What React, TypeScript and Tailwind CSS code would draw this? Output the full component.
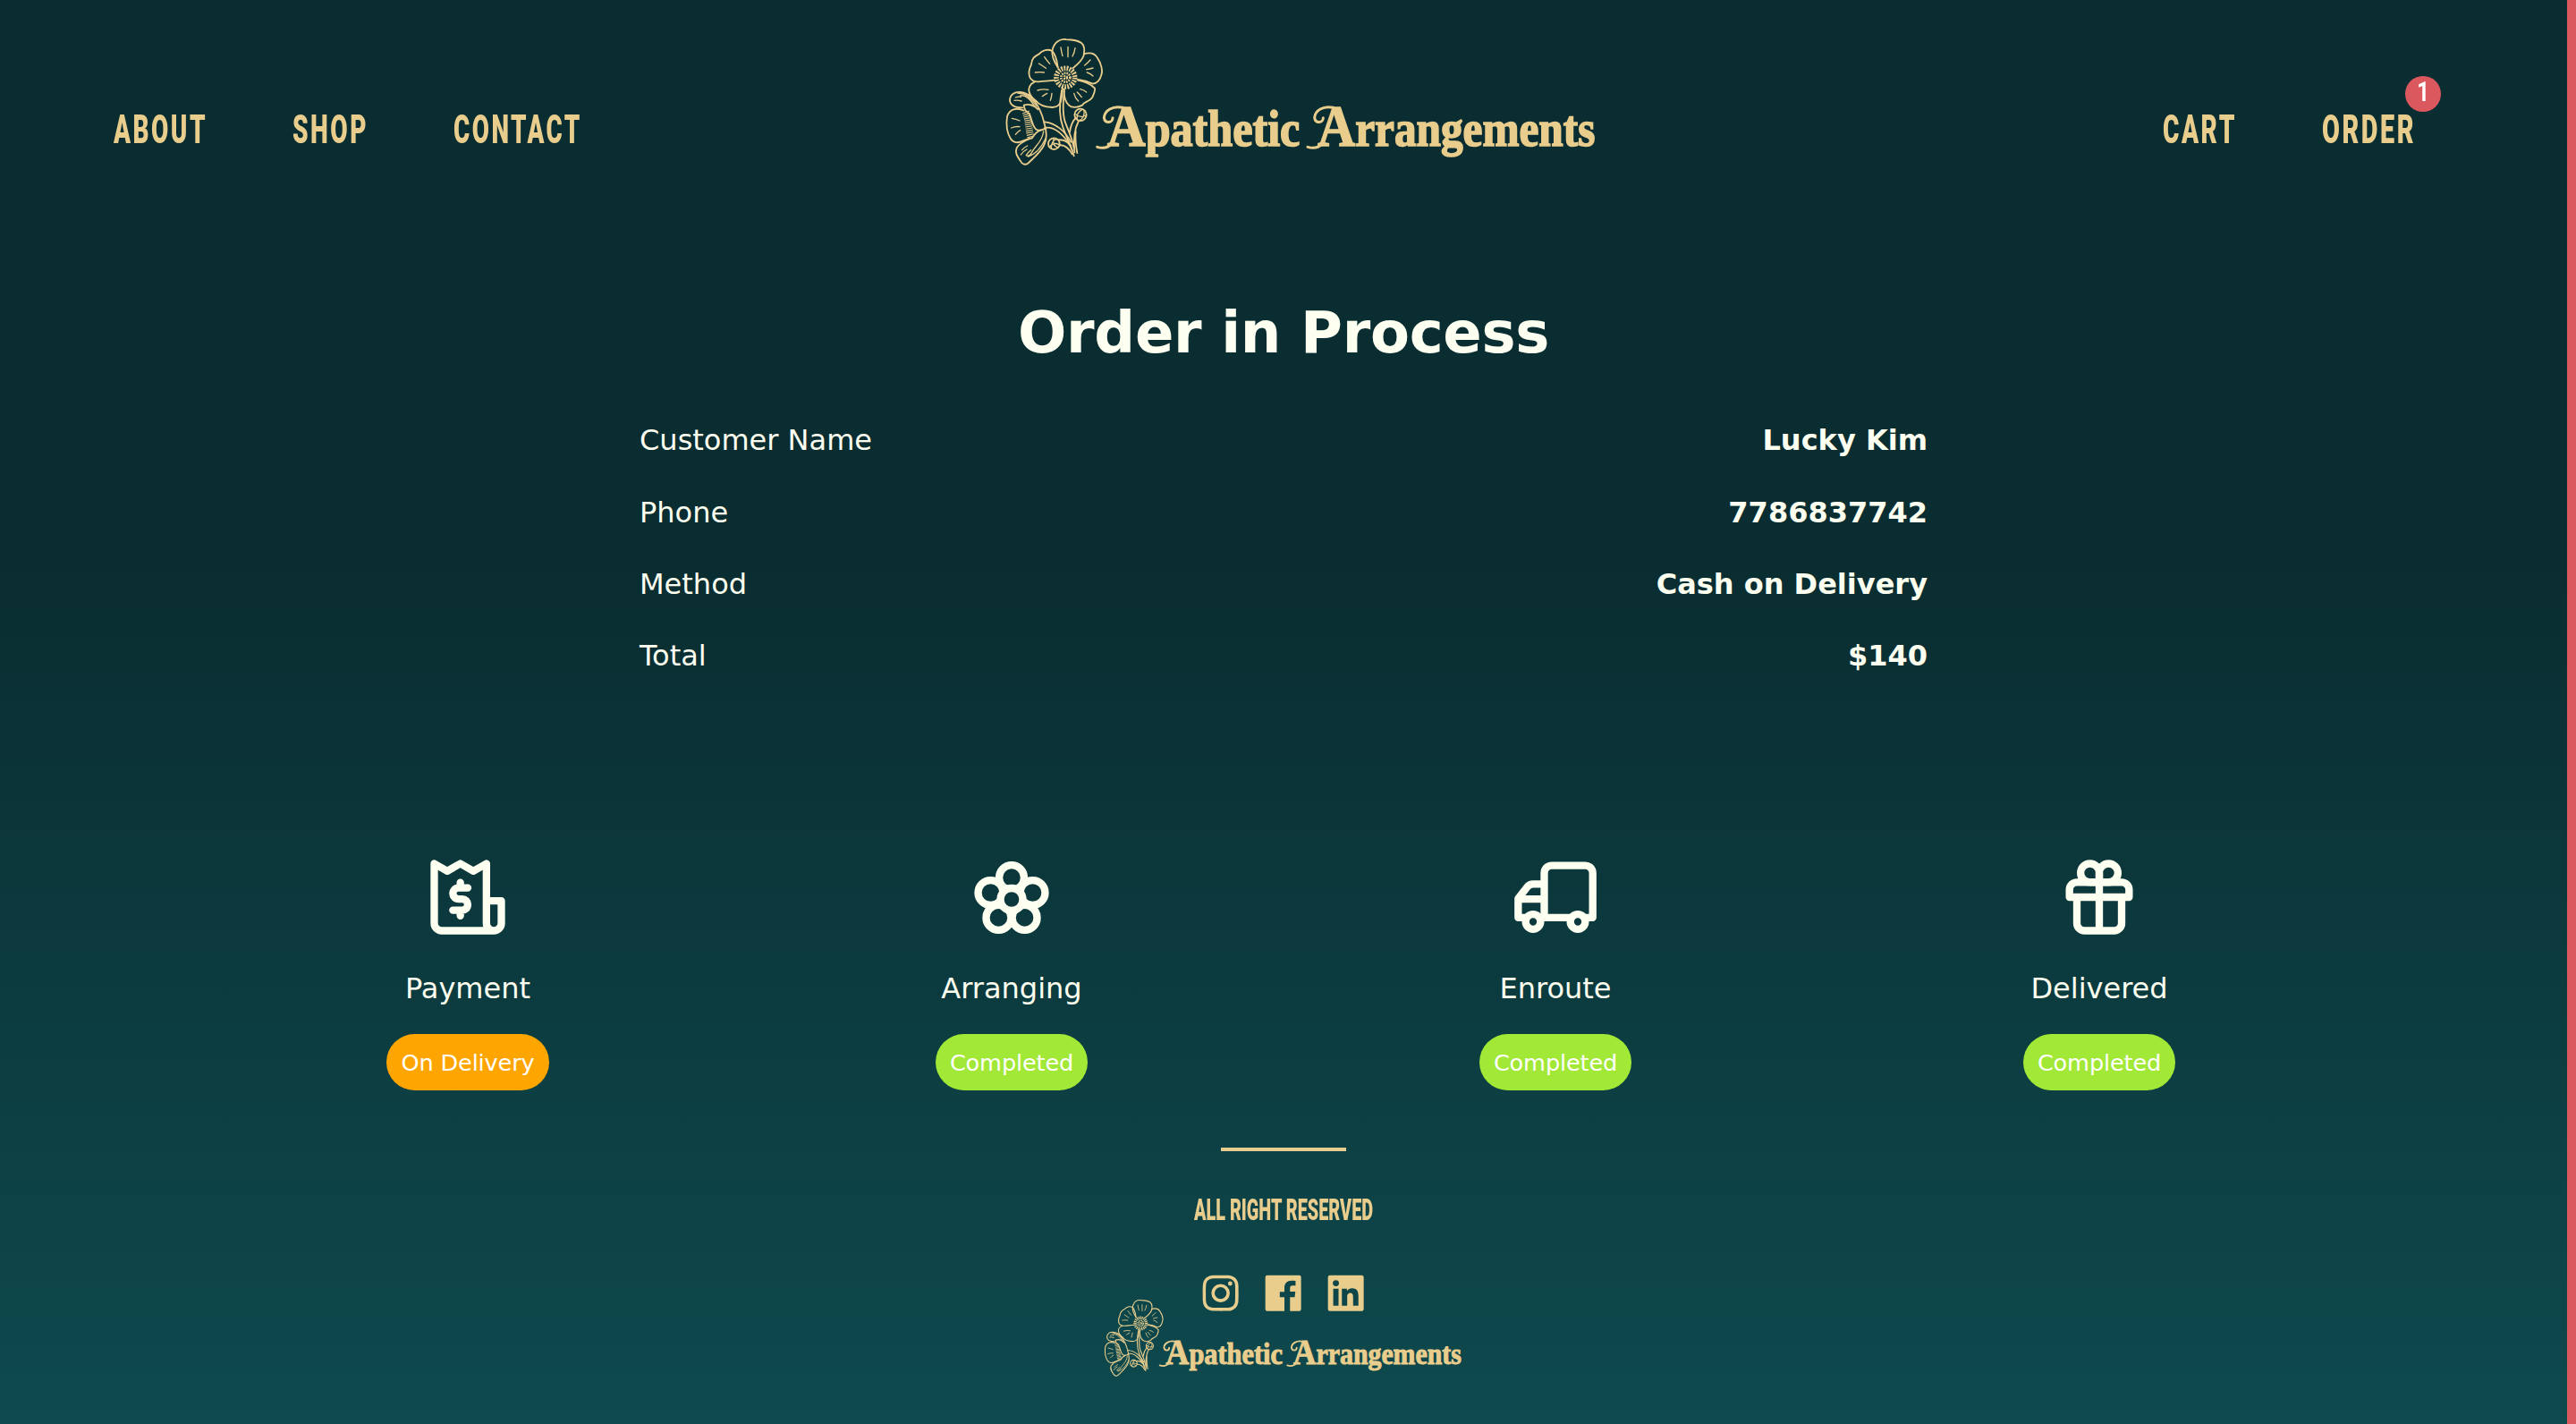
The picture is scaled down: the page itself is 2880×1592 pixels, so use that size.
import { useLayoutEffect, useRef, useState, type ReactNode } from "react";
import { BiLogoFacebookSquare, BiLogoInstagram, BiLogoLinkedinSquare } from "react-icons/bi";

/** Condensed display lettering: the text is squeezed to the given width. */
function Condensed({ text, width, className }: { text: string; width: number; className: string }) {
  const ref = useRef<HTMLSpanElement>(null);
  const [scale, setScale] = useState(0.6);
  useLayoutEffect(() => {
    if (ref.current) setScale(width / ref.current.offsetWidth);
  }, [width]);
  return (
    <span className="block whitespace-nowrap font-['Roboto',sans-serif] font-black" style={{ width }}>
      <span ref={ref} className={`inline-block origin-left ${className}`} style={{ transform: `scaleX(${scale})` }}>
        {text}
      </span>
    </span>
  );
}

function Logo({ className }: { className: string }) {
  return (
    <svg viewBox="45 38 1980 426" className={`overflow-visible ${className}`} fill="none" stroke="#e9cd8d" strokeWidth="5.5" strokeLinecap="round">
      <g>
        <path d="M218 135C205 115 196 95 200 75C207 50 225 38 245 41C265 42 285 44 297 53C308 62 308 80 305 95C298 115 280 128 268 138" />
        <path d="M305 90C325 84 342 88 350 102C362 120 370 145 364 160C360 178 348 190 335 190C318 182 300 178 285 176" />
        <path d="M218 135C215 110 208 88 198 80C185 72 165 78 155 90C140 98 130 105 129 125C122 140 118 155 124 168C130 180 140 184 155 183C175 181 195 180 207 178" />
        <path d="M140 184C125 190 118 205 122 218C126 232 135 240 145 247C155 262 180 268 200 269C220 268 228 258 230 240C233 225 232 212 234 205" />
        <path d="M285 178C305 182 330 192 342 205C344 215 338 225 334 235C325 250 305 250 300 262C285 270 265 272 255 262C242 250 238 225 238 208" />
      </g>
      <g strokeWidth="4">
        <path d="M228 68Q230 84 234 97M252 66V100M276 70Q274 86 267 98M173 100Q181 112 191 123M154 122Q168 130 178 138M142 152Q158 150 172 152M327 110Q318 120 308 128M336 137Q326 140 314 142M316 152Q328 156 336 164M150 212Q168 206 186 210M166 232Q174 226 182 222M198 222Q197 236 193 246M272 222Q276 238 287 248M283 218Q291 226 298 235M293 208Q304 210 314 218" />
      </g>
      <circle cx="244" cy="169" r="31" strokeWidth="17" strokeDasharray="5.5 3.8" strokeLinecap="butt" />
      <circle cx="244" cy="169" r="15" strokeWidth="8" strokeDasharray="5 3" strokeLinecap="butt" />
      <circle cx="244" cy="169" r="5" strokeWidth="7" strokeDasharray="5 3" strokeLinecap="butt" />
      <g>
        <path d="M231 212C222 260 222 300 235 335C245 365 262 395 272 432" />
        <path d="M240 212C234 260 234 300 245 325C256 352 268 380 272 405" />
        <path d="M258 352C260 335 266 318 278 304M274 420C270 380 272 345 288 314M283 422C278 395 276 370 278 350" />
        <circle cx="294" cy="294" r="20" />
        <path d="M283 310C280 296 286 284 300 276M290 313C302 308 308 298 306 280M278 292C288 302 300 302 312 296" strokeWidth="4" />
        <circle cx="205" cy="391" r="19" />
        <path d="M218 377C206 374 196 384 196 408M222 394C208 386 198 392 190 402M204 373C200 390 206 400 218 404" strokeWidth="4" />
        <path d="M221 378C245 376 258 388 266 412M224 396C244 394 256 408 266 426" />
        <path d="M175 318C210 322 242 348 262 385M174 338C205 330 236 360 262 398" />
      </g>
      <g>
        <path d="M100 270C78 270 58 264 57 245C58 225 75 216 92 218C112 220 125 230 135 242C152 262 165 290 172 320" />
        <path d="M92 230C108 226 124 240 138 262M84 222C108 220 124 232 146 264M120 225C132 242 142 246 146 250" strokeWidth="4" />
        <path d="M104 262C120 256 140 262 152 276M104 262C106 280 114 285 122 290C132 312 132 330 144 342C152 350 164 346 176 340" />
        <path d="M104 280C80 268 55 275 48 300C44 325 48 355 60 375C68 388 85 390 100 382C112 376 122 374 132 372C138 362 146 350 160 346" />
        <path d="M172 320C180 345 182 375 172 395C160 420 140 435 120 455C110 465 98 460 92 448C80 430 74 420 80 405C88 390 105 382 124 374" />
        <path d="M170 350C166 385 142 398 132 418C126 430 118 434 112 430C116 422 122 418 128 412M178 372C160 410 140 428 118 434" strokeWidth="4" />
        <path d="M72 246Q84 244 96 248M76 236Q86 232 94 234M64 306Q78 308 90 314M62 338Q76 332 90 334M76 360Q84 350 92 346M94 428Q102 416 114 410M98 412Q106 402 116 398" strokeWidth="4" />
      </g>
      <path d="M110 284C120 310 120 340 128 372" strokeWidth="24" strokeDasharray="3.5 3.5" strokeLinecap="butt" />
      <g strokeWidth="9">
        <path d="M436 270C402 262 374 280 373 304C376 324 402 322 402 304M402 388C388 404 368 408 350 402" />
        <path d="M436 270C402 262 374 280 373 304C376 324 402 322 402 304M402 388C388 404 368 408 350 402" transform="translate(706)" />
      </g>
      <g fill="#e9cd8d" strokeWidth="5" fontFamily="'Liberation Serif', serif" fontWeight="700" fontSize="168">
        <text x="384" y="397" textLength="646" lengthAdjust="spacingAndGlyphs">
          <tspan fontSize="198">A</tspan>pathetic
        </text>
        <text x="1090" y="397" textLength="930" lengthAdjust="spacingAndGlyphs">
          <tspan fontSize="198">A</tspan>rrangements
        </text>
      </g>
    </svg>
  );
}

function StepIcon({ children }: { children: ReactNode }) {
  return (
    <svg viewBox="0 0 24 24" className="size-[100px]" fill="none" stroke="#fdfff0" strokeWidth="2" strokeLinecap="round" strokeLinejoin="round">
      {children}
    </svg>
  );
}

const steps = [
  {
    label: "Payment",
    status: "On Delivery",
    pill: "bg-[#ffa500]",
    icon: (
      <StepIcon>
        <path d="M19 21H5a2 2 0 0 1-2-2V3l3.5 2L10 3l3.5 2L17 3v16a2 2 0 0 0 4 0v-6h-4M21 19a2 2 0 0 1-2 2" />
        <path d="M17 19a2 2 0 0 0 2 2h-2z" fill="#fdfff0" stroke="none" />
        <path d="M12 9.5H9.5a1.5 1.5 0 0 0 0 3h1a1.5 1.5 0 0 1 0 3H8M10 8.1v1.4M10 15.5V17" />
      </StepIcon>
    ),
  },
  {
    label: "Arranging",
    status: "Completed",
    pill: "bg-[#a2e836]",
    icon: (
      <StepIcon>
        <mask id="flower-centre" maskUnits="userSpaceOnUse" x="0" y="0" width="24" height="24">
          <rect width="24" height="24" fill="white" stroke="none" />
          <circle cx="12" cy="12.6" r="2.5" fill="black" stroke="none" />
        </mask>
        <g mask="url(#flower-centre)">
          <circle cx="12" cy="6.75" r="3.35" />
          <circle cx="6.35" cy="10.8" r="3.35" />
          <circle cx="17.65" cy="10.8" r="3.35" />
          <circle cx="8.5" cy="17.5" r="3.35" />
          <circle cx="15.5" cy="17.5" r="3.35" />
        </g>
        <circle cx="12" cy="12.6" r="3" />
      </StepIcon>
    ),
  },
  {
    label: "Enroute",
    status: "Completed",
    pill: "bg-[#a2e836]",
    icon: (
      <StepIcon>
        <path d="M9 17.5v-12a2 2 0 0 1 2-2h9a2 2 0 0 1 2 2v12h-2M16 17.5H8M4 17.5H2v-5.1l2.4-3.1A2 2 0 0 1 6 8.5h3M2.2 12.5H9" />
        <circle cx="6" cy="18.6" r="2" />
        <circle cx="18" cy="18.6" r="2" />
      </StepIcon>
    ),
  },
  {
    label: "Delivered",
    status: "Completed",
    pill: "bg-[#a2e836]",
    icon: (
      <StepIcon>
        <path d="M4 12v-2a2 2 0 0 1 2-2h12a2 2 0 0 1 2 2v2zM6 12v7a2 2 0 0 0 2 2h8a2 2 0 0 0 2-2v-7M12 5.5V21" />
        <path d="M12 8H9.5A2.5 2.5 0 1 1 12 5.5zM12 8h2.5A2.5 2.5 0 1 0 12 5.5z" />
      </StepIcon>
    ),
  },
];

const details = [
  ["Customer Name", "Lucky Kim"],
  ["Phone", "7786837742"],
  ["Method", "Cash on Delivery"],
  ["Total", "$140"],
];

const navText = "text-[45px] leading-[54px] tracking-[4px]";

export default function App() {
  return (
    <div className="flex h-[1592px] w-[2880px] overflow-hidden bg-[linear-gradient(to_bottom,#0a2d31_0%,#0a2d31_40%,#0e4a4e_100%)] font-['DejaVu_Sans',Verdana,sans-serif] text-[#fdfff0]">
      <div className="flex w-[2870px] flex-col items-center">
        <header className="flex h-[227px] w-full items-start pl-[127px] text-[#e9cd8d]">
          <nav className="flex w-[998px] gap-[95px] pt-[118px]">
            <Condensed text="ABOUT" width={105} className={navText} />
            <Condensed text="SHOP" width={85} className={navText} />
            <Condensed text="CONTACT" width={144} className={navText} />
          </nav>
          <Logo className="mt-[43px] h-[142px] w-[660px] shrink-0" />
          <nav className="ml-[633px] flex gap-[95px] pt-[118px]">
            <Condensed text="CART" width={83} className={navText} />
            <div className="relative">
              <Condensed text="ORDER" width={105} className={navText} />
              <span className="absolute -top-[33px] left-[93px] flex size-10 items-start justify-center rounded-full bg-[#dc585f] font-['Roboto',sans-serif] text-[32px] leading-[35px] font-bold text-white">
                <span className="inline-block scale-x-75">1</span>
              </span>
            </div>
          </nav>
        </header>

        <main className="flex w-full flex-col items-center">
          <h1 className="mt-[106px] text-[64px] leading-[78px] font-bold tracking-[-0.3px]">Order in Process</h1>
          <dl className="mt-[41px] flex w-[1440px] flex-col text-[32px]">
            {details.map(([name, value]) => (
              <div key={name} className="flex h-[80.4px] items-center justify-between">
                <dt>{name}</dt>
                <dd className="font-bold">{value}</dd>
              </div>
            ))}
          </dl>
          <ul className="mt-[179.4px] grid w-[2432px] grid-cols-4">
            {steps.map((step) => (
              <li key={step.label} className="flex flex-col items-center">
                {step.icon}
                <p className="mt-[33px] text-[32px] leading-[39px]">{step.label}</p>
                <span className={`mt-[31px] flex h-[63px] items-center rounded-full px-4 pt-0.5 text-[25.6px] tracking-[-0.15px] text-white ${step.pill}`}>
                  {step.status}
                </span>
              </li>
            ))}
          </ul>
        </main>

        <footer className="mt-16 flex flex-col items-center text-[#e9cd8d]">
          <div className="h-1 w-[140px] bg-[#e9cd8d]" />
          <div className="mt-[46px]">
            <Condensed text="ALL RIGHT RESERVED" width={200} className="text-[33px] leading-[40px]" />
          </div>
          <div className="mt-[46px] flex gap-[16.7px]">
            <BiLogoInstagram className="size-[53.3px]" />
            <BiLogoFacebookSquare className="size-[53.3px]" />
            <BiLogoLinkedinSquare className="size-[53.3px]" />
          </div>
          <Logo className="-mt-[19px] h-[86px] w-[400px]" />
        </footer>
      </div>
      <div className="h-full w-[10px] bg-[#dc585f]" />
    </div>
  );
}
